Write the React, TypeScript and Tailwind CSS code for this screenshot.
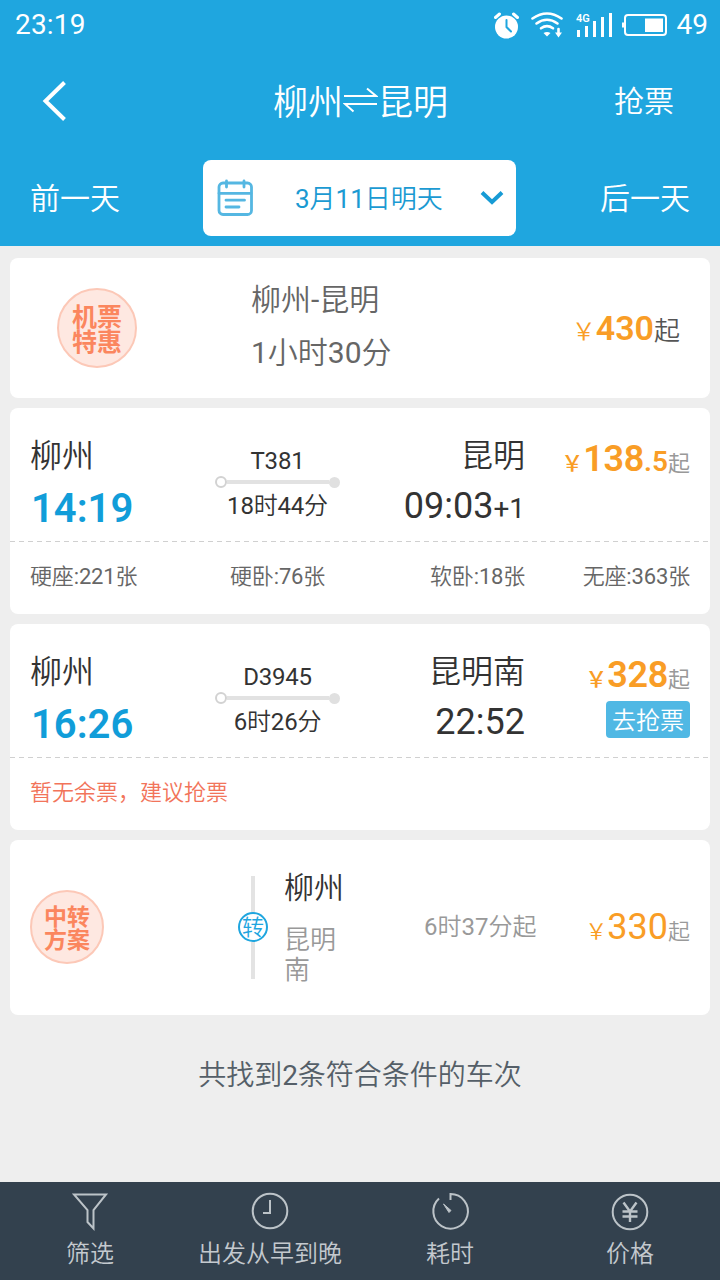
import type { ReactNode } from "react";

function AlarmIcon() {
  return (
    <svg width="26" height="28" viewBox="0 0 26 28" fill="none">
      <circle cx="12.5" cy="16" r="11.5" fill="#fff" />
      <path d="M1.5 6.5 5.5 3M23.5 6.5 19.5 3" stroke="#fff" strokeWidth="3" strokeLinecap="round" />
      <path d="M12.5 9v7l4.5 4.5" stroke="#1fa6df" strokeWidth="2" strokeLinecap="round" />
    </svg>
  );
}

function WifiIcon() {
  return (
    <svg width="34" height="28" viewBox="0 0 34 28" fill="none" stroke="#fff" strokeWidth="2.6" strokeLinecap="round">
      <path d="M1.500 7.500Q16 -2.500 30.500 7.500" />
      <path d="M5.500 12.500Q16 5 26.500 12.500" />
      <path d="M10 17.300Q16 13 22 17.300" />
      <path d="M12.500 22Q16 20 19.500 22L16 25.500Z" fill="#fff" stroke="none" />
      <path d="M27.500 18v5" strokeWidth="2.600" />
      <path d="M24 21.500h7L27.500 26.500Z" fill="#fff" stroke="none" />
    </svg>
  );
}

function SignalIcon() {
  return (
    <svg width="38" height="26" viewBox="0 0 38 26" fill="#fff">
      <text x="0" y="10" fontSize="11" fontWeight="600" fontFamily="Roboto, sans-serif">4G</text>
      <path d="M1 18h3v7H1zM9 14h3v11H9zM17 9h3v16h-3zM25 5h3v20h-3zM33 1h3v24h-3z" />
    </svg>
  );
}

function BatteryIcon() {
  return (
    <svg width="46" height="24" viewBox="0 0 46 24" fill="none">
      <rect x="3" y="2" width="41" height="20" rx="3" stroke="#fff" strokeWidth="2" />
      <path d="M0 9.500h2.500v5H0zM23 5.500h18v13.500H23z" fill="#fff" />
    </svg>
  );
}

function CalendarIcon() {
  return (
    <svg width="36" height="38" viewBox="0 0 36 38" fill="none" stroke="#55b7e2" strokeWidth="2.800" strokeLinecap="round">
      <rect x="2" y="4" width="32.500" height="31.500" rx="4" />
      <path d="M2 14.300h32M9.500 2v6M27 2v6M9 21.200h18.500M9 28h13" />
    </svg>
  );
}

function Exchange() {
  return (
    <svg width="35" height="36" viewBox="0 0 35 36" fill="none" stroke="#fff" strokeWidth="2" className="shrink-0">
      <path d="M1 10h32L24 2.500M34 18H2l8.500 7.500" />
    </svg>
  );
}

function Price({ amount, fraction, light }: { amount: string; fraction?: string; light?: boolean }) {
  return (
    <div className={light ? "text-[36px] leading-[50px] whitespace-nowrap text-[#f99d26]" : "text-[36px] leading-[50px] font-medium whitespace-nowrap text-[#f99d26]"}>
      <span className={light ? "text-[22px]" : "font-['Noto_Sans_CJK_SC',sans-serif] text-[22px] leading-none font-medium"}>￥</span>
      <span className={light ? "" : "font-semibold tracking-[-0.3px]"}>{amount}</span>
      {fraction && <span className="text-[28px] font-semibold">{fraction}</span>}
      <span className={light ? "text-[22px] text-[#999]" : "font-['Noto_Sans_CJK_SC',sans-serif] text-[22px] leading-none font-normal text-[#999]"}>起</span>
    </div>
  );
}

function Divider() {
  return (
    <div className="h-px bg-[repeating-linear-gradient(to_right,#d0d0d0_0_5px,transparent_5px_9px)]" />
  );
}

type TrainProps = {
  depart: string;
  number: string;
  duration: string;
  to: string;
  arrive: string;
  nextDay?: string;
  price: ReactNode;
  children: ReactNode;
};

function TrainCard({ depart, number, duration, to, arrive, nextDay, price, children }: TrainProps) {
  return (
    <section className="flex h-[206px] flex-col rounded-lg bg-white">
      <div className="flex h-[133px] px-5 pt-[21px]">
        <div className="w-[185px]">
          <div className="text-[32px] leading-[54px] text-[#333]">柳州</div>
          <div className="pl-px text-[40px] leading-[52px] font-semibold text-[#119dd9]">{depart}</div>
        </div>
        <div className="flex w-[125px] flex-col items-center pt-[18px] text-[24px] text-[#333]">
          <div className="leading-[28px] tracking-[-0.2px]">{number}</div>
          <div className="mt-px flex h-3 w-full items-center">
            <div className="size-3 rounded-full border-2 border-[#d2d2d2] bg-white" />
            <div className="h-1 flex-1 bg-[#e2e2e2]" />
            <div className="size-[11px] rounded-full bg-[#e0e0e0]" />
          </div>
          <div className="mt-[4px] leading-[28px] tracking-[-0.2px]">{duration}</div>
        </div>
        <div className="w-[185px] text-right text-[#333]">
          <div className="text-[32px] leading-[54px]">{to}</div>
          <div className="text-[36px] leading-[47px]">
            {arrive}
            {nextDay && <span className="text-[28px]">{nextDay}</span>}
          </div>
        </div>
        <div className="flex flex-1 flex-col items-end pt-[5px]">{price}</div>
      </div>
      <Divider />
      <div className="flex-1 px-5 pt-[19px] text-[22px] leading-[32px] text-[#666]">{children}</div>
    </section>
  );
}

function Tab({ label, children }: { label: string; children: ReactNode }) {
  return (
    <div className="flex flex-1 flex-col items-center pt-2">
      <svg width="42" height="42" viewBox="0 0 42 42" fill="none" stroke="#bcc3c8" strokeWidth="2">
        {children}
      </svg>
      <span className="mt-[6px] text-[24px] leading-[32px] text-[#c4c9ce]">{label}</span>
    </div>
  );
}

export default function App() {
  return (
    <div className="flex h-[1280px] w-[720px] flex-col overflow-hidden bg-[#eee] font-['Roboto','Noto_Sans_CJK_SC_DemiLight','Noto_Sans_CJK_SC',sans-serif]">
      <header className="h-[246px] bg-[#1fa6df] text-white">
        <div className="flex h-[50px] items-center pr-3 pl-[15px] text-[28px] leading-[50px]">
          <span className="flex-1 tracking-[0.2px]">23:19</span>
          <AlarmIcon />
          <span className="ml-[11px]"><WifiIcon /></span>
          <span className="ml-[11px]"><SignalIcon /></span>
          <span className="ml-[8px]"><BatteryIcon /></span>
          <span className="ml-[9px]">49</span>
        </div>
        <div className="flex h-[102px] items-center pr-[46px] pl-[42px]">
          <svg width="26" height="42" viewBox="0 0 26 42" fill="none" stroke="#fff" strokeWidth="4">
            <path d="M22.500 2.500 3.500 21 22.500 39.500" />
          </svg>
          <div className="ml-[205px] flex items-center pt-[6px] text-[35px] leading-[50px]">
            柳州<Exchange />昆明
          </div>
          <div className="ml-auto text-[30px]">抢票</div>
        </div>
        <div className="flex items-center justify-between px-[30px] pt-[8px] text-[30px]">
          <span className="w-[173px]">前一天</span>
          <div className="flex h-[76px] w-[313px] items-center rounded-lg bg-white pr-[12px] pl-[14px] text-[26px] text-[#1b9ad2]">
            <CalendarIcon />
            <span className="ml-[42px] pt-[3px]">3月11日明天</span>
            <svg className="ml-auto" width="24" height="16" viewBox="0 0 24 16" fill="none" stroke="#179bd5" strokeWidth="4">
              <path d="M2 2.500 12 12 22 2.500" />
            </svg>
          </div>
          <span className="w-[174px] text-right">后一天</span>
        </div>
      </header>

      <main className="flex flex-1 flex-col gap-[10px] px-[10px] pt-3">
        <section className="flex h-[140px] items-center rounded-lg bg-white pr-[30px] pl-[47px]">
          <div className="flex size-20 flex-col items-center justify-center rounded-full border-2 border-[#fcc8b7] bg-[#fee8e1] font-['Noto_Sans_CJK_SC',sans-serif] text-[25px] leading-[25px] font-bold text-[#fb865e]">
            <span>机票</span>
            <span>特惠</span>
          </div>
          <div className="ml-[114px] pb-1 text-[30px] leading-[53px] text-[#666]">
            <div>柳州-昆明</div>
            <div>1小时30分</div>
          </div>
          <div className="ml-auto text-[34px] font-semibold whitespace-nowrap text-[#f99d26]">
            <span className="text-[24px] font-normal">￥</span>430
            <span className="text-[26px] font-normal text-[#555]">起</span>
          </div>
        </section>

        <TrainCard
          depart="14:19"
          number="T381"
          duration="18时44分"
          to="昆明"
          arrive="09:03"
          nextDay="+1"
          price={<Price amount="138" fraction=".5" />}
        >
          <div className="flex tracking-[-0.15px]">
            <span className="w-[200px]">硬座:221张</span>
            <span className="w-[200px]">硬卧:76张</span>
            <span>软卧:18张</span>
            <span className="ml-auto">无座:363张</span>
          </div>
        </TrainCard>

        <TrainCard
          depart="16:26"
          number="D3945"
          duration="6时26分"
          to="昆明南"
          arrive="22:52"
          price={
            <>
              <Price amount="328" />
              <button className="mt-[1px] h-[37px] w-[84px] rounded bg-[#50b8e4] pt-[3px] text-[24px] leading-[34px] text-white">去抢票</button>
            </>
          }
        >
          <span className="text-[#f2745a]">暂无余票，建议抢票</span>
        </TrainCard>

        <section className="flex h-[175px] items-center rounded-lg bg-white px-5 pb-px">
          <div className="flex size-[74px] flex-col items-center justify-center rounded-full border-2 border-[#fcc8b7] bg-[#fee8e1] font-['Noto_Sans_CJK_SC',sans-serif] text-[23px] leading-[23px] font-bold text-[#fb865e]">
            <span>中转</span>
            <span>方案</span>
          </div>
          <div className="ml-[134px] flex h-[103px] w-[30px] flex-col items-center">
            <div className="w-1 flex-1 bg-[#e3e3e3]" />
            <div className="flex size-[30px] items-center justify-center rounded-full border-2 border-[#1fa6df] pt-[2px] text-[22px] leading-[24px] text-[#1fa6df]">转</div>
            <div className="w-1 flex-1 bg-[#e3e3e3]" />
          </div>
          <div className="ml-4 w-[60px] pb-[7px]">
            <div className="text-[30px] leading-[52px] text-[#333]">柳州</div>
            <div className="mt-[11px] w-[53px] text-[26px] leading-[30px] text-[#999]">昆明南</div>
          </div>
          <div className="ml-[80px] text-[24px] text-[#999]">6时37分起</div>
          <div className="ml-auto pt-1"><Price amount="330" light /></div>
        </section>

        <p className="mt-[31px] text-center text-[28px] leading-[40px] text-[#555f68]">共找到2条符合条件的车次</p>
      </main>

      <nav className="flex h-[98px] bg-[#33414e]">
        <Tab label="筛选">
          <path d="M5 4.500h32L24.500 20v18.500L18.500 32V20Z" />
        </Tab>
        <Tab label="出发从早到晚">
          <circle cx="21" cy="21" r="17.300" />
          <path d="M21 10v13h-7" />
        </Tab>
        <Tab label="耗时">
          <path d="M21.500 10V4A17.300 17.300 0 1 1 10 8.500" />
          <path d="m14.500 14 7.500 6.500-2 2Z" fill="#bcc3c8" strokeWidth="1" />
        </Tab>
        <Tab label="价格">
          <circle cx="21" cy="22" r="17.300" />
          <path d="m14.500 12.500 6.500 9 6.500-9M21 21.500V32M13.500 21.500h15M13.500 26.500h15" strokeWidth="2.400" />
        </Tab>
      </nav>
    </div>
  );
}
